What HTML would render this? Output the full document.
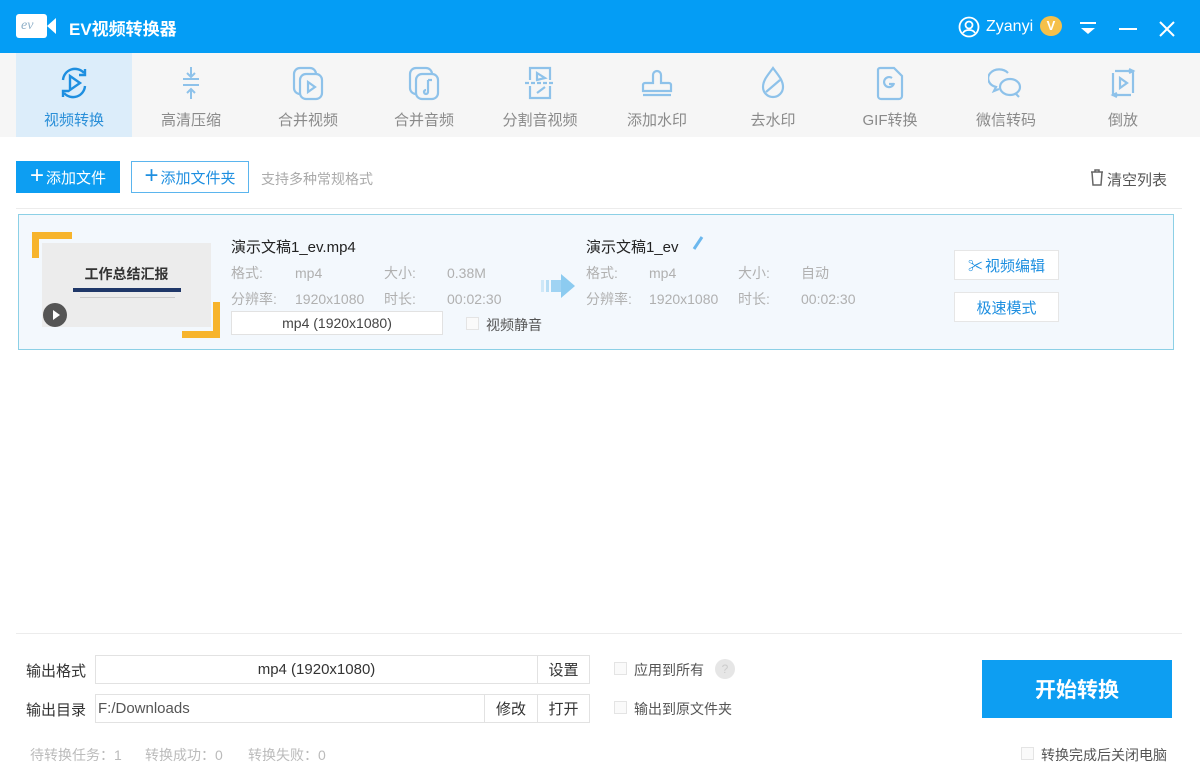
<!DOCTYPE html>
<html><head><meta charset="utf-8"><style>
*{margin:0;padding:0;box-sizing:border-box}
body{width:1200px;height:779px;overflow:hidden;background:#fff;font-family:"Liberation Sans","Noto Sans CJK SC",sans-serif;position:relative;color:#333}
.abs{position:absolute}
.title{left:0;top:0;width:1200px;height:53px;background:#049df5}
.tb{left:0;top:53px;width:1200px;height:84px;background:#f6f6f6}
.tab{position:absolute;top:53px;width:116px;height:84px;text-align:center;font-size:15px;color:#8a8a8a}
.tab svg{position:absolute;left:40px;top:12px}
.tab span{position:absolute;left:0;right:0;top:56px}
.btn{position:absolute;font-size:15px;display:flex;align-items:center;justify-content:center}
.gray{color:#aaa;font-size:14px}
.cb{position:absolute;width:13px;height:13px;border:1px solid #e4e4e4;background:#fafafa}
.lbl{position:absolute;font-size:14px;color:#b0b0b0}
.val{position:absolute;font-size:14px;color:#b0b0b0;margin-top:2px}
.box{position:absolute;border:1px solid #e2e2e2;background:#fff;font-size:15px;display:flex;align-items:center;justify-content:center;color:#333}
</style></head><body>
<div class="abs title"></div>
<div class="abs" style="left:16px;top:14px;width:31px;height:24px;background:#fff;border-radius:3px;font-style:italic;color:#8fb0c8;font-size:14px;padding-left:5px;line-height:24px;font-family:'Liberation Serif',serif">ev</div>
<div class="abs" style="left:47px;top:18px;width:0;height:0;border-top:8px solid transparent;border-bottom:8px solid transparent;border-right:9px solid #fff"></div>
<div class="abs" style="left:69px;top:15px;color:#fff;font-size:17px;font-weight:bold">EV视频转换器</div>
<svg class="abs" style="left:958px;top:16px" width="22" height="22" viewBox="0 0 22 22"><circle cx="11" cy="11" r="9.5" fill="none" stroke="#fff" stroke-width="1.8"/><circle cx="11" cy="9" r="3.5" fill="none" stroke="#fff" stroke-width="1.8"/><path d="M5 17c2-4 10-4 12 0" fill="none" stroke="#fff" stroke-width="1.8"/></svg>
<div class="abs" style="left:986px;top:18px;color:#fff;font-size:16px">Zyanyi</div>
<div class="abs" style="left:1040px;top:16px;width:22px;height:20px;border-radius:50%;background:#f5c04a;color:#fff;font-size:13px;font-weight:bold;text-align:center;line-height:20px">V</div>
<svg class="abs" style="left:1078px;top:20px" width="20" height="16"><path d="M2 3h16" stroke="#fff" stroke-width="2"/><path d="M3 8h14l-7 6z" fill="#fff"/></svg>
<div class="abs" style="left:1119px;top:28px;width:18px;height:2px;background:#fff"></div>
<svg class="abs" style="left:1158px;top:20px" width="18" height="18"><path d="M2 2L16 16M16 2L2 16" stroke="#fff" stroke-width="2"/></svg>

<div class="abs tb"></div>
<div class="tab" style="left:16px;background:#dcedfa;color:#2a8fd8"><svg width="36" height="36" viewBox="0 0 36 36"><path d="M7 15a12 12 0 0 1 21-7M29 21a12 12 0 0 1-21 7" fill="none" stroke="#1e8fe0" stroke-width="2.4"/><path d="M29 4v6h-6M7 32v-6h6" fill="none" stroke="#1e8fe0" stroke-width="2.4"/><path d="M14 11l10 7-10 7z" fill="none" stroke="#1e8fe0" stroke-width="2.4"/></svg><span>视频转换</span></div>
<div class="tab" style="left:133px"><svg width="36" height="36" viewBox="0 0 36 36" fill="none" stroke="#8ec2ea" stroke-width="2"><path d="M18 2v10M14 8l4 4 4-4M10 14h16M10 20h16M18 34v-10M14 28l4-4 4 4"/></svg><span>高清压缩</span></div>
<div class="tab" style="left:250px"><svg width="36" height="36" viewBox="0 0 36 36" fill="none" stroke="#8ec2ea" stroke-width="2.2"><rect x="4" y="3" width="22" height="26" rx="6"/><rect x="10" y="9" width="22" height="25" rx="6" fill="#f6f6f6"/><path d="M18 17l7 5-7 5z"/></svg><span>合并视频</span></div>
<div class="tab" style="left:366px"><svg width="36" height="36" viewBox="0 0 36 36" fill="none" stroke="#8ec2ea" stroke-width="2.2"><rect x="4" y="3" width="22" height="26" rx="6"/><rect x="10" y="9" width="22" height="25" rx="6" fill="#f6f6f6"/><path d="M22 15v12M22 15h4M22 27a2 2 0 1 1-2-2"/></svg><span>合并音频</span></div>
<div class="tab" style="left:482px"><svg width="36" height="36" viewBox="0 0 36 36" fill="none" stroke="#8ec2ea" stroke-width="2.2"><path d="M8 15V3h20v12M8 21v12h20V21"/><path d="M3 18h30" stroke-dasharray="4 2"/><path d="M15 8l8 5-8 2zM15 28l8-6"/></svg><span>分割音视频</span></div>
<div class="tab" style="left:599px"><svg width="36" height="36" viewBox="0 0 36 36" fill="none" stroke="#8ec2ea" stroke-width="2.2"><path d="M14 18V10a4 4 0 0 1 8 0v8h8a2 2 0 0 1 2 2v6H4v-6a2 2 0 0 1 2-2zM4 30h28"/></svg><span>添加水印</span></div>
<div class="tab" style="left:715px"><svg width="36" height="36" viewBox="0 0 36 36" fill="none" stroke="#8ec2ea" stroke-width="2.2"><path d="M18 3C13 10 8 15 8 22a10 10 0 0 0 20 0c0-7-5-12-10-19zM11 27l14-12"/></svg><span>去水印</span></div>
<div class="tab" style="left:832px"><svg width="36" height="36" viewBox="0 0 36 36" fill="none" stroke="#8ec2ea" stroke-width="2.2"><path d="M8 3h14l8 8v20a3 3 0 0 1-3 3H9a3 3 0 0 1-3-3V5a2 2 0 0 1 2-2zM22 18a5 5 0 1 1-2-5M17 19h5"/></svg><span>GIF转换</span></div>
<div class="tab" style="left:948px"><svg width="36" height="36" viewBox="0 0 36 36" fill="none" stroke="#8ec2ea" stroke-width="2.2"><path d="M20 8a11 9 0 1 0-12 14l-2 4 5-2"/><ellipse cx="22" cy="22" rx="10" ry="8" fill="#f6f6f6"/><path d="M28 29l3 3"/></svg><span>微信转码</span></div>
<div class="tab" style="left:1065px"><svg width="36" height="36" viewBox="0 0 36 36" fill="none" stroke="#8ec2ea" stroke-width="2.2"><path d="M10 6h18v22M26 30H8V8M24 4l4 2-4 2M12 32l-4-2 4-2M15 13l7 5-7 5z"/></svg><span>倒放</span></div>

<div class="btn" style="left:16px;top:161px;width:104px;height:32px;background:#0d9ef2;color:#fff"><span style="font-size:24px;font-weight:300;margin-right:2px;margin-top:-3px">+</span>添加文件</div>
<div class="btn" style="left:131px;top:161px;width:118px;height:32px;border:1px solid #5bb5ee;color:#1e8fe0"><span style="font-size:24px;font-weight:300;margin-right:2px;margin-top:-3px">+</span>添加文件夹</div>
<div class="abs gray" style="left:261px;top:169px">支持多种常规格式</div>
<svg class="abs" style="left:1089px;top:168px" width="16" height="18" fill="none" stroke="#666" stroke-width="1.5"><path d="M2 4h12M6 4V2h4v2M3 4l1 13h8l1-13"/></svg>
<div class="abs" style="left:1107px;top:169px;font-size:15px;color:#555">清空列表</div>
<div class="abs" style="left:16px;top:208px;width:1166px;height:1px;background:#ececec"></div>

<div class="abs" style="left:18px;top:214px;width:1156px;height:136px;background:#f3f8fd;border:1px solid #8cd0e6"></div>
<div class="abs" style="left:32px;top:232px;width:40px;height:7px;background:#f7b42c"></div>
<div class="abs" style="left:32px;top:232px;width:7px;height:26px;background:#f7b42c"></div>
<div class="abs" style="left:182px;top:331px;width:38px;height:7px;background:#f7b42c"></div>
<div class="abs" style="left:213px;top:302px;width:7px;height:36px;background:#f7b42c"></div>
<div class="abs" style="left:42px;top:243px;width:169px;height:84px;background:#ececec"></div>
<div class="abs" style="left:42px;top:264px;width:169px;text-align:center;font-size:14px;font-weight:bold;color:#333">工作总结汇报</div>
<div class="abs" style="left:73px;top:288px;width:108px;height:4px;background:#1f3768"></div>
<div class="abs" style="left:80px;top:297px;width:95px;height:1px;background:#ccc"></div>
<div class="abs" style="left:43px;top:303px;width:24px;height:24px;border-radius:50%;background:#555"></div>
<div class="abs" style="left:53px;top:310px;border-left:7px solid #fff;border-top:5px solid transparent;border-bottom:5px solid transparent"></div>

<div class="abs" style="left:231px;top:236px;font-size:15px;color:#222">演示文稿1_ev.mp4</div>
<div class="lbl" style="left:231px;top:263px">格式:</div><div class="val" style="left:295px;top:263px">mp4</div>
<div class="lbl" style="left:384px;top:263px">大小:</div><div class="val" style="left:447px;top:263px">0.38M</div>
<div class="lbl" style="left:231px;top:289px">分辨率:</div><div class="val" style="left:295px;top:289px">1920x1080</div>
<div class="lbl" style="left:384px;top:289px">时长:</div><div class="val" style="left:447px;top:289px">00:02:30</div>
<div class="box" style="left:231px;top:311px;width:212px;height:24px;color:#444;font-size:14px">mp4 (1920x1080)</div>
<div class="cb" style="left:466px;top:317px"></div>
<div class="abs" style="left:486px;top:315px;font-size:14px;color:#555">视频静音</div>
<svg class="abs" style="left:541px;top:272px" width="36" height="28"><rect x="0" y="8" width="3" height="12" fill="#cfe8f8"/><rect x="5" y="8" width="3" height="12" fill="#b8def5"/><rect x="10" y="8" width="10" height="12" fill="#9fd3f3"/><path d="M20 2l14 12-14 12z" fill="#8ccbf0"/></svg>

<div class="abs" style="left:586px;top:236px;font-size:15px;color:#222">演示文稿1_ev</div>
<svg class="abs" style="left:690px;top:236px" width="14" height="16"><path d="M12 1L4 13" stroke="#6cb8ee" stroke-width="3"/></svg>
<div class="lbl" style="left:586px;top:263px">格式:</div><div class="val" style="left:649px;top:263px">mp4</div>
<div class="lbl" style="left:738px;top:263px">大小:</div><div class="lbl" style="left:801px;top:263px">自动</div>
<div class="lbl" style="left:586px;top:289px">分辨率:</div><div class="val" style="left:649px;top:289px">1920x1080</div>
<div class="lbl" style="left:738px;top:289px">时长:</div><div class="val" style="left:801px;top:289px">00:02:30</div>
<div class="box" style="left:954px;top:250px;width:105px;height:30px;color:#1e8fe0;font-size:15px;border-color:#e6e6e6"><span style="margin-right:2px">✂</span>视频编辑</div>
<div class="box" style="left:954px;top:292px;width:105px;height:30px;color:#1e8fe0;font-size:15px;border-color:#e6e6e6">极速模式</div>

<div class="abs" style="left:16px;top:633px;width:1166px;height:1px;background:#ececec"></div>
<div class="abs" style="left:26px;top:660px;font-size:15px">输出格式</div>
<div class="box" style="left:95px;top:655px;width:443px;height:29px">mp4 (1920x1080)</div>
<div class="box" style="left:537px;top:655px;width:53px;height:29px">设置</div>
<div class="abs" style="left:26px;top:699px;font-size:15px">输出目录</div>
<div class="box" style="left:95px;top:694px;width:390px;height:29px;justify-content:flex-start;padding-left:2px;color:#555">F:/Downloads</div>
<div class="box" style="left:484px;top:694px;width:54px;height:29px">修改</div>
<div class="box" style="left:537px;top:694px;width:53px;height:29px">打开</div>
<div class="cb" style="left:614px;top:662px"></div>
<div class="abs" style="left:634px;top:660px;font-size:14px;color:#555">应用到所有</div>
<div class="abs" style="left:715px;top:659px;width:20px;height:20px;border-radius:50%;background:#e6e6e6;color:#ccc;font-size:12px;text-align:center;line-height:20px">?</div>
<div class="cb" style="left:614px;top:701px"></div>
<div class="abs" style="left:634px;top:699px;font-size:14px;color:#555">输出到原文件夹</div>
<div class="btn" style="left:982px;top:660px;width:190px;height:58px;background:#0d9ef2;color:#fff;font-size:21px;font-weight:bold">开始转换</div>
<div class="abs" style="left:30px;top:745px;font-size:14px;color:#bbb">待转换任务：1</div>
<div class="abs" style="left:145px;top:745px;font-size:14px;color:#bbb">转换成功：0</div>
<div class="abs" style="left:248px;top:745px;font-size:14px;color:#bbb">转换失败：0</div>
<div class="cb" style="left:1021px;top:747px"></div>
<div class="abs" style="left:1041px;top:745px;font-size:14px;color:#555">转换完成后关闭电脑</div>
</body></html>
